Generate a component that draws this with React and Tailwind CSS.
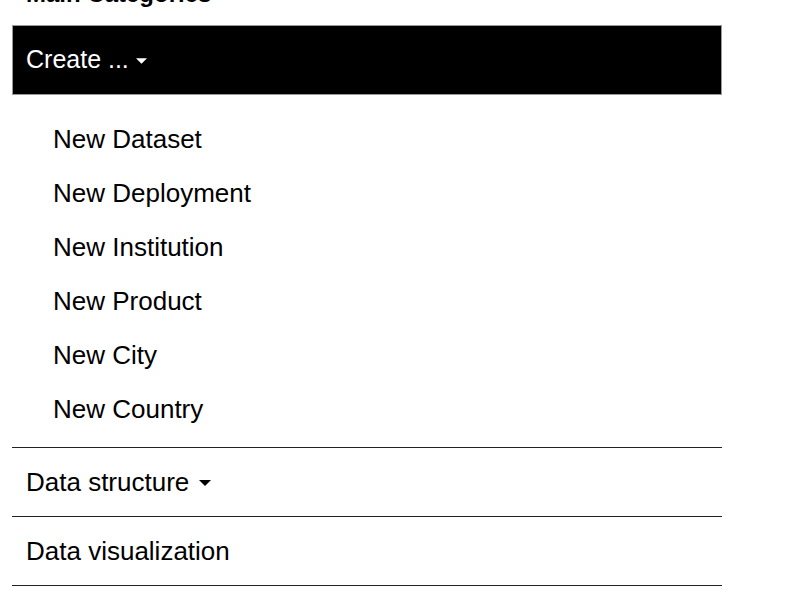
import React from "react";

const Caret = ({ className }) => (
  <svg viewBox="0 0 12 6" className={className} fill="currentColor">
    <path d="M0 0 L12 0 L6 6 Z" />
  </svg>
);

const createItems = [
  "New Dataset",
  "New Deployment",
  "New Institution",
  "New Product",
  "New City",
  "New Country",
];

export default function App() {
  return (
    <div
      className="min-h-screen bg-white text-black overflow-hidden"
      style={{ fontFamily: '"Liberation Sans", Arial, sans-serif' }}
    >
      <div className="w-[710px] ml-[12px]">
        <h2 className="-mt-[20px] h-[45px] pl-[14px] text-[24px] font-bold leading-[28px]">
          Main Categories
        </h2>

        {/* Create dropdown, open */}
        <button className="flex h-[70px] w-full items-center gap-[7px] border border-[#9a9a9a] bg-black pl-[13px] text-[25px] text-white">
          <span>Create ...</span>
          <Caret className="mt-[1px] h-[6px] w-[11px]" />
        </button>
        <ul className="pt-[17px] pb-[11px] border-b-[1.5px] border-[#222]">
          {createItems.map((item) => (
            <li
              key={item}
              className="flex h-[54px] items-center pl-[41px] text-[26px]"
            >
              {item}
            </li>
          ))}
        </ul>

        <div className="flex h-[69px] items-center gap-[10px] border-b-[1.5px] border-[#222] pl-[14px] text-[26px]">
          <span>Data structure</span>
          <Caret className="mt-[1px] h-[6px] w-[12px]" />
        </div>
        <div className="flex h-[69px] items-center border-b-[1.5px] border-[#222] pl-[14px] text-[26px]">
          Data visualization
        </div>
      </div>
    </div>
  );
}
